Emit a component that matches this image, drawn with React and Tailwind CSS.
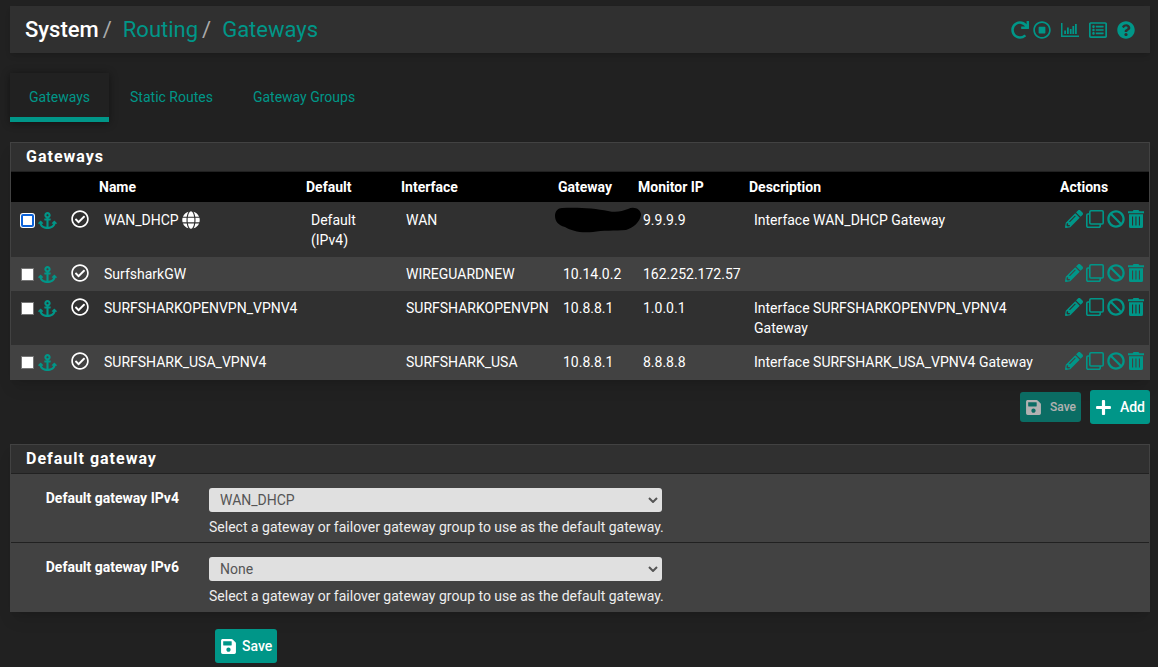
import {
  FaAnchor,
  FaBan,
  FaGlobe,
  FaPencilAlt,
  FaPlus,
  FaQuestionCircle,
  FaRedo,
  FaRegCheckCircle,
  FaRegListAlt,
  FaRegStopCircle,
  FaSave,
} from "react-icons/fa";

const gateways = [
  {
    name: "WAN_DHCP",
    isDefault: true,
    tier: "Default (IPv4)",
    iface: "WAN",
    gateway: null,
    monitor: "9.9.9.9",
    descr: "Interface WAN_DHCP Gateway",
  },
  {
    name: "SurfsharkGW",
    iface: "WIREGUARDNEW",
    gateway: "10.14.0.2",
    monitor: "162.252.172.57",
    descr: "",
  },
  {
    name: "SURFSHARKOPENVPN_VPNV4",
    iface: "SURFSHARKOPENVPN",
    gateway: "10.8.8.1",
    monitor: "1.0.0.1",
    descr: "Interface SURFSHARKOPENVPN_VPNV4 Gateway",
  },
  {
    name: "SURFSHARK_USA_VPNV4",
    iface: "SURFSHARK_USA",
    gateway: "10.8.8.1",
    monitor: "8.8.8.8",
    descr: "Interface SURFSHARK_USA_VPNV4 Gateway",
  },
];

const tabs = ["Gateways", "Static Routes", "Gateway Groups"];

function ChartIcon() {
  return (
    <svg viewBox="0 0 18 14" className="h-[14px] w-[18px]" fill="currentColor" aria-hidden="true">
      <path d="M0 0h1.5v12.5H18V14H0z" />
      <path d="M3.2 7.5h1.8V11H3.2zM6 4.5h1.8V11H6zM8.8 6h1.8v5H8.8zM11.4 3h1.8v8h-1.8zM14 1h1.8v10H14z" />
    </svg>
  );
}

function CloneIcon() {
  return (
    <svg viewBox="0 0 18 18" className="size-[18px]" fill="none" stroke="currentColor" strokeWidth="1.6" aria-hidden="true">
      <rect x="3.8" y="0.8" width="13.4" height="13.2" rx="1.2" />
      <path d="M3.8 4H2A1.2 1.2 0 0 0 .8 5.2V16A1.2 1.2 0 0 0 2 17.2h11A1.2 1.2 0 0 0 14.2 16v-2" />
    </svg>
  );
}

function TrashIcon() {
  return (
    <svg viewBox="0 0 16 18" className="h-[18px] w-4" fill="currentColor" aria-hidden="true">
      <path d="M5.5 0h5l.8 1.2H16v2H0v-2h4.7z" />
      <path
        fillRule="evenodd"
        d="M1 4.2h14v12.3a1.5 1.5 0 0 1-1.5 1.5h-11A1.5 1.5 0 0 1 1 16.5zM4 6.5v9h1.1v-9zM7.4 6.5v9h1.1v-9zM10.9 6.5v9H12v-9z"
      />
    </svg>
  );
}

function IconLink({ label, children }) {
  return (
    <a href="#" aria-label={label} title={label} className="text-[#009688]">
      {children}
    </a>
  );
}

function PageHeader() {
  return (
    <header className="flex h-[47px] items-center justify-between bg-[#303030] px-[15px] shadow-md">
      <nav className="flex items-center text-[22px] leading-6 text-[#009688]">
        <span className="font-medium text-white">System</span>
        <span className="mr-[11px] ml-1 text-[#aaa]">/</span>
        <a href="#">Routing</a>
        <span className="mr-[11px] ml-1 text-[#aaa]">/</span>
        <a href="#">Gateways</a>
      </nav>
      <div className="flex items-center gap-[10px] text-lg">
        <div className="flex items-center gap-1">
          <IconLink label="Restart service">
            <FaRedo />
          </IconLink>
          <IconLink label="Stop service">
            <FaRegStopCircle />
          </IconLink>
        </div>
        <IconLink label="Status">
          <ChartIcon />
        </IconLink>
        <IconLink label="Logs">
          <FaRegListAlt />
        </IconLink>
        <IconLink label="Help">
          <FaQuestionCircle />
        </IconLink>
      </div>
    </header>
  );
}

function Tabs() {
  return (
    <nav className="mt-5 flex gap-0.5 text-sm text-[#009688]">
      {tabs.map((tab, i) => (
        <a
          key={tab}
          href="#"
          className={
            i === 0
              ? "border-b-[5px] border-[#009688] px-[19px] pt-[14px] pb-[10px] leading-5 shadow-[0_1px_8px_rgba(0,0,0,0.45)]"
              : "border-b-[5px] border-transparent px-[19px] pt-[14px] pb-[10px] leading-5"
          }
        >
          {tab}
        </a>
      ))}
    </nav>
  );
}

function Panel({ title, children }) {
  return (
    <section className="border border-[#424242] shadow-lg">
      <h2 className="h-7 bg-[#303030] px-[15px] text-base leading-7 font-bold tracking-[1px]">
        {title}
      </h2>
      {children}
    </section>
  );
}

function GatewayRow({ gw }) {
  return (
    <tr className="align-top odd:bg-[#303030] even:bg-[#424242] first:*:pt-2">
      <td className="py-[7px] pl-[10px]">
        <div className="flex h-5 items-center gap-1">
          <input
            type="checkbox"
            aria-label={`Select ${gw.name}`}
            className={
              gw.isDefault
                ? "size-[13px] appearance-none rounded-xs border-2 border-[#0b61d8] bg-white ring-1 ring-white"
                : "size-[13px] appearance-none border border-[#767676] bg-white"
            }
          />
          <IconLink label={`Move ${gw.name}`}>
            <FaAnchor className="size-[19px]" />
          </IconLink>
        </div>
      </td>
      <td className="py-[7px] pl-[5px]">
        <FaRegCheckCircle className="size-[18px]" />
      </td>
      <td className="py-[7px] pl-[10px]">
        <span className="flex items-center gap-[3px]">
          {gw.name}
          {gw.isDefault && <FaGlobe className="size-[18px]" />}
        </span>
      </td>
      <td className="py-[7px] pr-[5px] pl-[10px]">{gw.tier}</td>
      <td className="py-[7px] pl-[10px]">{gw.iface}</td>
      <td className="relative py-[7px] pl-[10px]">
        {gw.gateway ?? (
          <svg viewBox="0 0 86 26" className="absolute top-[5px] left-[2px] z-10 h-[26px] w-[86px]" aria-hidden="true">
            <path d="M7 1C20 0 40 1 53 4C62 6 67 4 73 2C79-1 86 2 86 8C85 15 78 21 71 23C60 24 47 23 38 25C24 26 17 24 10 20C3 18 0 14 0 9C0 4 3 1 7 1Z" />
          </svg>
        )}
      </td>
      <td className="py-[7px] pl-[10px]">{gw.monitor}</td>
      <td className="py-[7px] pr-[5px] pl-[10px]">{gw.descr}</td>
      <td className="py-[7px] pl-[10px]">
        <div className="flex items-center gap-[3px] text-lg leading-5">
          <IconLink label={`Edit ${gw.name}`}>
            <FaPencilAlt />
          </IconLink>
          <IconLink label={`Copy ${gw.name}`}>
            <CloneIcon />
          </IconLink>
          <IconLink label={`Disable ${gw.name}`}>
            <FaBan />
          </IconLink>
          <IconLink label={`Delete ${gw.name}`}>
            <TrashIcon />
          </IconLink>
        </div>
      </td>
    </tr>
  );
}

function GatewayTable() {
  return (
    <table className="w-full table-fixed border-t border-[#212121] text-sm leading-5">
      <colgroup>
        <col className="w-[55px]" />
        <col className="w-[28px]" />
        <col className="w-[207px]" />
        <col className="w-[95px]" />
        <col className="w-[157px]" />
        <col className="w-[80px]" />
        <col className="w-[111px]" />
        <col />
        <col className="w-[94px]" />
      </colgroup>
      <thead>
        <tr className="bg-black text-left">
          <th></th>
          <th></th>
          <th className="px-[5px] py-[5px]">Name</th>
          <th className="px-[5px]">Default</th>
          <th className="px-[5px]">Interface</th>
          <th className="px-[5px]">Gateway</th>
          <th className="px-[5px]">Monitor IP</th>
          <th className="px-[5px]">Description</th>
          <th className="px-[5px]">Actions</th>
        </tr>
      </thead>
      <tbody>
        {gateways.map((gw) => (
          <GatewayRow key={gw.name} gw={gw} />
        ))}
      </tbody>
    </table>
  );
}

function GatewaySelect({ id, label, value }) {
  return (
    <div className="flex gap-[30px] border-t border-[#212121] bg-[#424242] pt-[14px] pb-[5px] text-sm leading-5">
      <label htmlFor={id} className="w-[168px] shrink-0 text-right font-bold">
        {label}
      </label>
      <div className="min-w-0">
        <div className="relative w-[453px] max-w-full">
          <select
            id={id}
            defaultValue={value}
            className="block h-6 w-full appearance-none rounded-[3px] bg-[#e0e0e0] px-[11px] text-sm text-[#555]"
          >
            <option>{value}</option>
          </select>
          <svg
            viewBox="0 0 10 6"
            className="pointer-events-none absolute top-[9px] right-1 h-[6px] w-[10px]"
            fill="none"
            stroke="#555"
            strokeWidth="2"
            aria-hidden="true"
          >
            <path d="M1 1l4 4 4-4" />
          </svg>
        </div>
        <p className="mt-[5px] text-[#eee]">
          Select a gateway or failover gateway group to use as the default gateway.
        </p>
      </div>
    </div>
  );
}

export default function App() {
  return (
    <div className="min-h-screen bg-[#212121] pt-1.5 pr-2 pb-1 pl-2.5 font-[Roboto,sans-serif] text-white">
      <PageHeader />
      <Tabs />

      <main className="mt-5">
        <Panel title="Gateways">
          <GatewayTable />
        </Panel>

        <div className="mt-[10px] flex items-center justify-end gap-[9px]">
          <button
            type="button"
            disabled
            className="flex h-[30px] items-center gap-2 rounded-[3px] bg-[#009688] px-[5px] text-xs font-medium opacity-65"
          >
            <FaSave className="size-[17px]" />
            Save
          </button>
          <button
            type="button"
            className="flex h-[34px] items-center gap-2 rounded-[3px] bg-[#009688] px-[5px] text-sm font-medium"
          >
            <FaPlus className="size-[17px]" />
            Add
          </button>
        </div>

        <div className="mt-5">
          <Panel title="Default gateway">
            <GatewaySelect id="defaultgw4" label="Default gateway IPv4" value="WAN_DHCP" />
            <GatewaySelect id="defaultgw6" label="Default gateway IPv6" value="None" />
          </Panel>
        </div>

        <button
          type="button"
          className="mt-[17px] ml-[205px] flex h-[34px] items-center gap-[5px] rounded-[3px] bg-[#009688] px-[5px] text-sm font-medium"
        >
          <FaSave className="size-[17px]" />
          Save
        </button>
      </main>
    </div>
  );
}
